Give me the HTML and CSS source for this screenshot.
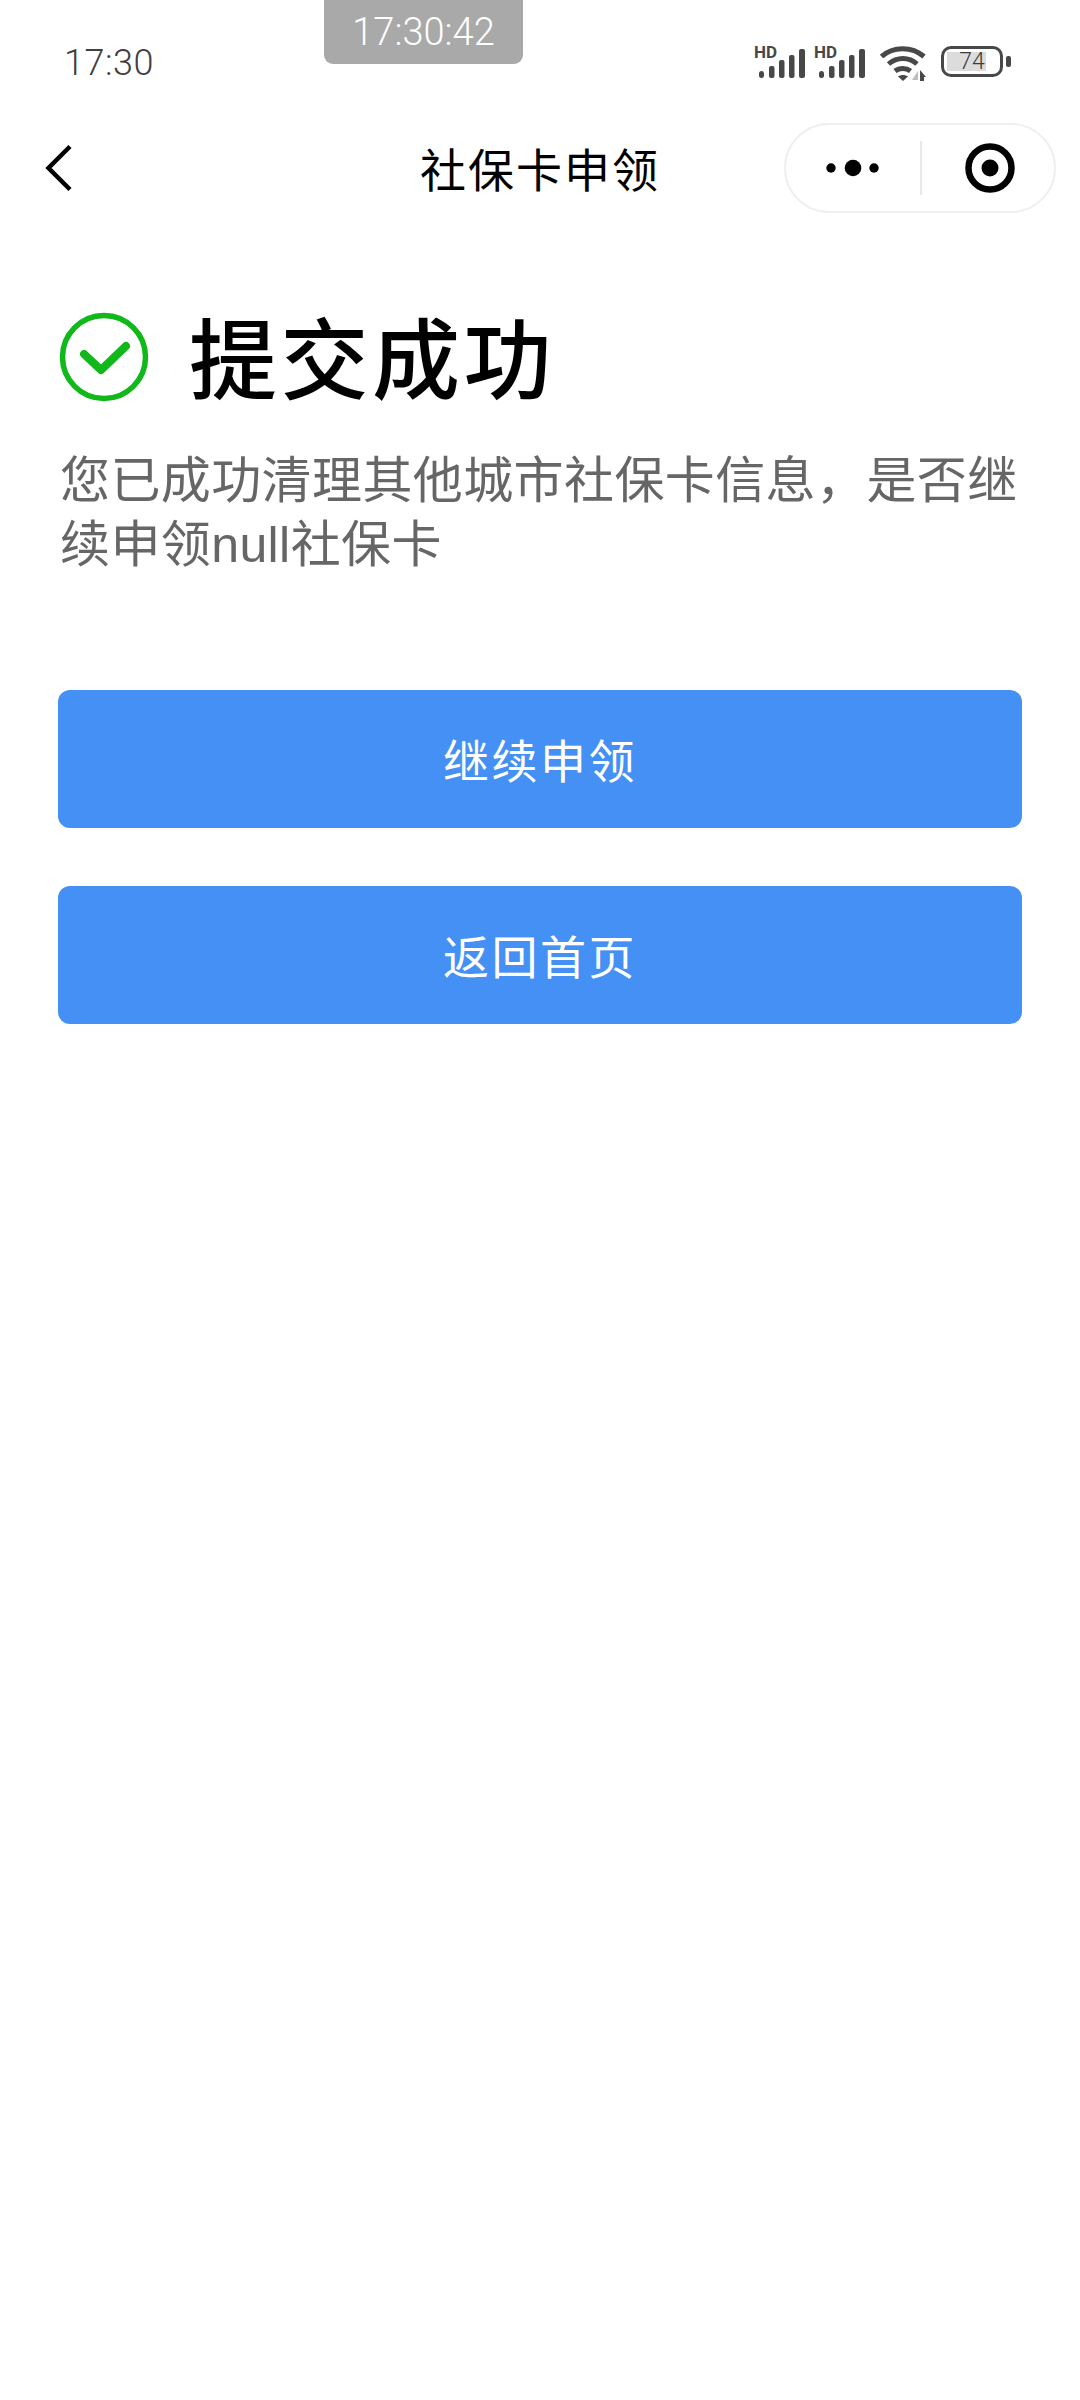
FILE: index.html
```html
<!DOCTYPE html>
<html lang="zh-CN">
<head>
<meta charset="utf-8">
<title>社保卡申领</title>
<link rel="stylesheet" href="styles.css">
</head>
<body>
<div class="phone">
  <div class="timer">17:30:42</div>
  <header class="status">
    <span class="clock">17:30</span>
    <div class="status-icons">
      <svg class="signal" viewBox="0 -6 52 40" width="52" height="40">
        <text class="hd" x="0" y="13">HD</text>
        <rect x="5" y="26" width="5" height="7" rx="2.5"/><rect x="15" y="21" width="5.5" height="12" rx="2"/><rect x="25" y="15" width="5.5" height="18" rx="2"/><rect x="35" y="10" width="5.5" height="23" rx="2"/><rect x="45" y="4" width="6" height="29" rx="2"/>
      </svg>
      <svg class="signal" viewBox="0 -6 52 40" width="52" height="40">
        <text class="hd" x="0" y="13">HD</text>
        <rect x="5" y="26" width="5" height="7" rx="2.5"/><rect x="15" y="21" width="5.5" height="12" rx="2"/><rect x="25" y="15" width="5.5" height="18" rx="2"/><rect x="35" y="10" width="5.5" height="23" rx="2"/><rect x="45" y="4" width="6" height="29" rx="2"/>
      </svg>
      <svg class="wifi" viewBox="0 0 48 36" width="48" height="36">
        <path class="wave" d="M2.500 11.500C14 1 33 1 45 11.500"/>
        <path class="wave" d="M9.500 19C18 11.500 30 11.500 38 19"/>
        <path class="wave" d="M16 26C20.500 22.500 27 22.500 31.500 26"/>
        <path class="wedge" d="M19 31.500C22 29.500 26 29.500 29 31.500L24 36Z"/>
        <path class="arrow-in" d="M39 26V35H33Z"/>
        <path class="wedge" d="M41 25L47 32H45V36H41Z"/>
      </svg>
      <div class="battery">
        <div class="battery-body">
          <div class="battery-fill"></div>
          <span class="battery-num">74</span>
        </div>
        <div class="battery-nub"></div>
      </div>
    </div>
  </header>

  <nav class="navbar">
    <button class="back" aria-label="返回">
      <svg viewBox="0 0 28 48" width="28" height="48"><path d="M25 2.500L3.500 24 25 45.500"/></svg>
    </button>
    <h1 class="nav-title">社保卡申领</h1>
    <div class="capsule">
      <div class="capsule-part capsule-more">
        <svg viewBox="-4 0 56 20" width="56" height="20"><circle cx="2" cy="10" r="4.700"/><circle cx="24" cy="10" r="8.300"/><circle cx="45" cy="10" r="4.700"/></svg>
      </div>
      <div class="capsule-sep"></div>
      <div class="capsule-part capsule-target">
        <svg viewBox="0 0 52 52" width="52" height="52"><circle class="ring" cx="26" cy="26" r="21.500"/><circle cx="26" cy="26" r="8.500"/></svg>
      </div>
    </div>
  </nav>

  <main class="content">
    <div class="result">
      <svg class="ok-icon" viewBox="0 0 90 90" width="90" height="90">
        <circle cx="45" cy="45" r="41.500"/>
        <path d="M25 42L42 58 67 34"/>
      </svg>
      <h2 class="result-title">提交成功</h2>
    </div>
    <p class="message">您已成功清理其他城市社保卡信息，是否继续申领null社保卡</p>
    <div class="actions">
      <button class="action">继续申领</button>
      <button class="action">返回首页</button>
    </div>
  </main>
</div>
</body>
</html>
```

FILE: styles.css
```css
* { box-sizing: border-box; }
html, body { margin: 0; padding: 0; background: #fff; }
body { font-family: "Noto Sans CJK SC", "Noto Sans", sans-serif; }
.phone { position: relative; width: 1080px; height: 2400px; overflow: hidden; background: #fff; }

.timer {
  position: absolute; left: 324px; top: 0; width: 199px; height: 64px;
  display: flex; align-items: center; justify-content: center;
  background: #a9a9a9; border-radius: 0 0 9px 9px; color: #fff;
  font: 300 38px Roboto, sans-serif;
}

.status { height: 123px; padding: 43px 69px 0 64px; display: flex; justify-content: space-between; align-items: flex-start; }
.clock { font: 300 36px/40px Roboto, sans-serif; color: #3f3f3f; letter-spacing: .5px; }
.status-icons { display: flex; align-items: flex-start; gap: 8px; margin-top: 2px; }
.signal { fill: #484848; margin-top: -6px; }
.hd { font: 700 17px Roboto, sans-serif; fill: #484848; }
.wifi { margin: 0 6px 0 5px; }
.wave { fill: none; stroke: #484848; stroke-width: 5; }
.wedge { fill: #484848; }
.arrow-in { fill: #bdbdbd; }
.battery { display: flex; align-items: center; gap: 3px; margin-top: 1px; }
.battery-body { position: relative; width: 62px; height: 31px; border: 3px solid #484848; border-radius: 10px; overflow: hidden; display: flex; align-items: center; justify-content: center; }
.battery-fill { position: absolute; left: 3px; top: 3px; bottom: 3px; width: 39px; background: #dcdcdc; }
.battery-num { position: relative; font: 300 23px/1 Roboto, sans-serif; color: #3c3c3c; }
.battery-nub { width: 5px; height: 11px; border-radius: 2px; background: #484848; }

.navbar { height: 90px; display: grid; grid-template-columns: 1fr auto 1fr; align-items: center; padding: 0 24px; }
.back { justify-self: start; margin-left: 21px; padding: 0; border: 0; background: none; display: flex; }
.back path { fill: none; stroke: #000; stroke-width: 4.500; }
.nav-title { margin: -3px 0 0; font-size: 46px; font-weight: 400; line-height: 60px; letter-spacing: 2px; color: #000; }
.capsule { justify-self: end; width: 272px; height: 90px; border: 2px solid #efefef; border-radius: 45px; display: flex; align-items: center; }
.capsule-part { display: flex; align-items: center; justify-content: center; }
.capsule-more { width: 134px; }
.capsule-target { flex: 1; padding-left: 4px; }
.capsule-part circle { fill: #000; }
.capsule-part .ring { fill: none; stroke: #000; stroke-width: 6.500; }
.capsule-sep { width: 2px; height: 54px; background: #eaeaea; }

.content { padding: 99px 57px 0 58px; }
.result { display: flex; align-items: center; height: 90px; }
.ok-icon { flex: none; margin-left: 1px; }
.ok-icon circle { fill: none; stroke: #10b81a; stroke-width: 5.500; }
.ok-icon path { fill: none; stroke: #10b81a; stroke-width: 8; stroke-linecap: round; stroke-linejoin: round; }
.result-title { margin: -6px 0 0 40px; font-size: 88px; font-weight: 500; line-height: 90px; letter-spacing: 3.500px; color: #000; }
.message { margin: 47px 0 0 2px; font-family: "Liberation Sans", "Noto Sans CJK SC", sans-serif; font-size: 50px; line-height: 64px; letter-spacing: .4px; color: #666; }
.actions { margin-top: 113px; display: flex; flex-direction: column; gap: 58px; }
.action { width: 964px; height: 138px; padding: 0 0 3px; border: 0; border-radius: 12px; background: #4590f5; color: #fff; font-family: inherit; font-size: 46px; letter-spacing: 2.500px; }
```
